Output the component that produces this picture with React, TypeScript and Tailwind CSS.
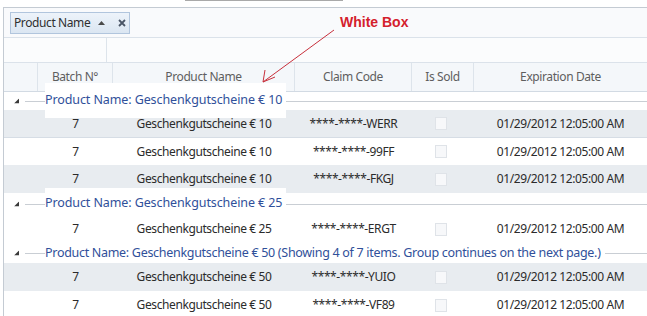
import React from "react";

const COLS = "grid grid-cols-[34px_75px_182px_117px_62px_1fr]";
const FONT = { fontFamily: '"Noto Sans", "Open Sans", sans-serif' };

type Row = { batch: string; name: string; code: string };

function Check() {
  return <div className="w-[12px] h-[13px] border border-[#dfe3e8] bg-[#f7f8fa]" />;
}

function DataRow({ r, alt, h = "h-[28px]", extra = "" }: { r: Row; alt: boolean; h?: string; extra?: string }) {
  return (
    <div className={`${COLS} ${h} items-center text-[12px] tracking-[-0.4px] text-[#2b2b2b] ${alt ? "bg-[#e8ecf0]" : "bg-white"} ${extra}`}>
      <div />
      <div className="text-center">{r.batch}</div>
      <div className="text-center">{r.name}</div>
      <div className="text-center">{r.code}</div>
      <div className="flex justify-center pr-[4px]">
        <Check />
      </div>
      <div className="text-center">01/29/2012 12:05:00 AM</div>
    </div>
  );
}

function GroupRow({ text, h, boxTop, boxH, track }: { text: string; h: string; boxTop: string; boxH: string; track: string }) {
  return (
    <div className={`relative ${h} bg-white`}>
      <div className="absolute left-[21px] right-0 top-1/2 h-px bg-[#c9ced4]" />
      <svg className="absolute left-[10px] top-1/2 -translate-y-1/2" width="5" height="5" viewBox="0 0 5 5">
        <polygon points="5,0 5,5 0,5" fill="#3a3a3a" />
      </svg>
      <div className={`absolute left-[41px] ${boxTop} ${boxH} z-10 bg-white flex items-center pr-[4px] text-[12.5px] ${track} text-[#30509a] whitespace-nowrap`}>
        {text}
      </div>
    </div>
  );
}

export default function App() {
  const g1: Row[] = [
    { batch: "7", name: "Geschenkgutscheine € 10", code: "****-****-WERR" },
    { batch: "7", name: "Geschenkgutscheine € 10", code: "****-****-99FF" },
    { batch: "7", name: "Geschenkgutscheine € 10", code: "****-****-FKGJ" },
  ];
  const g2: Row[] = [{ batch: "7", name: "Geschenkgutscheine € 25", code: "****-****-ERGT" }];
  const g3: Row[] = [
    { batch: "7", name: "Geschenkgutscheine € 50", code: "****-****-YUIO" },
    { batch: "7", name: "Geschenkgutscheine € 50", code: "****-****-VF89" },
  ];

  return (
    <div className="relative w-[647px] h-[316px] overflow-hidden bg-white" style={FONT}>
      {/* top strip */}
      <div className="h-[7px]">
        <div className="ml-[185px] w-[158px] h-px bg-[#a9a9a9]" />
      </div>

      {/* grid */}
      <div className="ml-[3px] border-l border-t border-[#c4cbd3]">
        {/* group panel */}
        <div className="h-[29px] bg-[#f9fafc] flex items-center pl-[6px]">
          <div className="h-[22px] w-[120px] border border-[#b1c5dd] bg-gradient-to-b from-[#edf3fa] to-[#dbe6f2] flex items-center pl-[3px] text-[12px] tracking-[-0.4px] text-[#2f2f2f] whitespace-nowrap">
            <span>Product Name</span>
            <svg className="ml-[8px]" width="7" height="4" viewBox="0 0 7 4">
              <polygon points="3.5,0 7,4 0,4" fill="#4a4a4a" />
            </svg>
            <svg className="ml-[13px]" width="8" height="8" viewBox="0 0 8 8">
              <path d="M1 1 L7 7 M7 1 L1 7" stroke="#4a5566" strokeWidth="1.8" />
            </svg>
          </div>
        </div>

        {/* filter row */}
        <div className="h-[26px] flex border-t border-b border-[#dbe2ea] bg-[#fbfcfd]">
          <div className="w-[103px] border-r border-[#dde4eb]" />
          <div className="flex-1" />
        </div>

        {/* header */}
        <div className={`${COLS} h-[29px] items-center text-[12px] tracking-[-0.4px] text-[#5e5e5e] bg-[#f4f7fa] border-b border-[#d2dae3]`}>
          <div className="h-full border-r border-[#dde4eb]" />
          <div className="h-full flex items-center justify-center border-r border-[#dde4eb]">Batch N°</div>
          <div className="h-full flex items-center justify-center border-r border-[#dde4eb]">Product Name</div>
          <div className="h-full flex items-center justify-center border-r border-[#dde4eb]">Claim Code</div>
          <div className="h-full flex items-center justify-center border-r border-[#dde4eb]">Is Sold</div>
          <div className="h-full flex items-center justify-center">Expiration Date</div>
        </div>

        <GroupRow text="Product Name: Geschenkgutscheine € 10" h="h-[18px]" boxTop="top-[-9px]" boxH="h-[35px]" track="tracking-[-0.1px]" />
        <DataRow r={g1[0]} alt={true} extra="border-b border-[#d6dde5]" h="h-[28px]" />
        <DataRow r={g1[1]} alt={false} h="h-[27px]" />
        <DataRow r={g1[2]} alt={true} />

        <GroupRow text="Product Name: Geschenkgutscheine € 25" h="h-[22px]" boxTop="top-[-5px]" boxH="h-[30px]" track="tracking-[-0.1px]" />
        <DataRow r={g2[0]} alt={false} />

        <GroupRow
          text="Product Name: Geschenkgutscheine € 50 (Showing 4 of 7 items. Group continues on the next page.)"
          h="h-[20px]"
          boxTop="top-[1px]"
          boxH="h-[19px]"
          track="tracking-[-0.3px]"
        />
        <DataRow r={g3[0]} alt={true} />
        <DataRow r={g3[1]} alt={false} />
      </div>

      {/* annotation */}
      <div
        className="absolute left-[340px] top-[12px] text-[14px] font-bold text-[#d4202c]"
        style={{ fontFamily: '"Liberation Sans", Arial, sans-serif' }}
      >
        White Box
      </div>
      <svg className="absolute left-0 top-0 pointer-events-none z-20" width="647" height="316">
        <line x1="334" y1="30" x2="263" y2="82" stroke="#c8303c" strokeWidth="1" />
        <line x1="263" y1="82" x2="265" y2="70" stroke="#c8303c" strokeWidth="1" />
        <line x1="263" y1="82" x2="275" y2="77" stroke="#c8303c" strokeWidth="1" />
      </svg>
    </div>
  );
}
